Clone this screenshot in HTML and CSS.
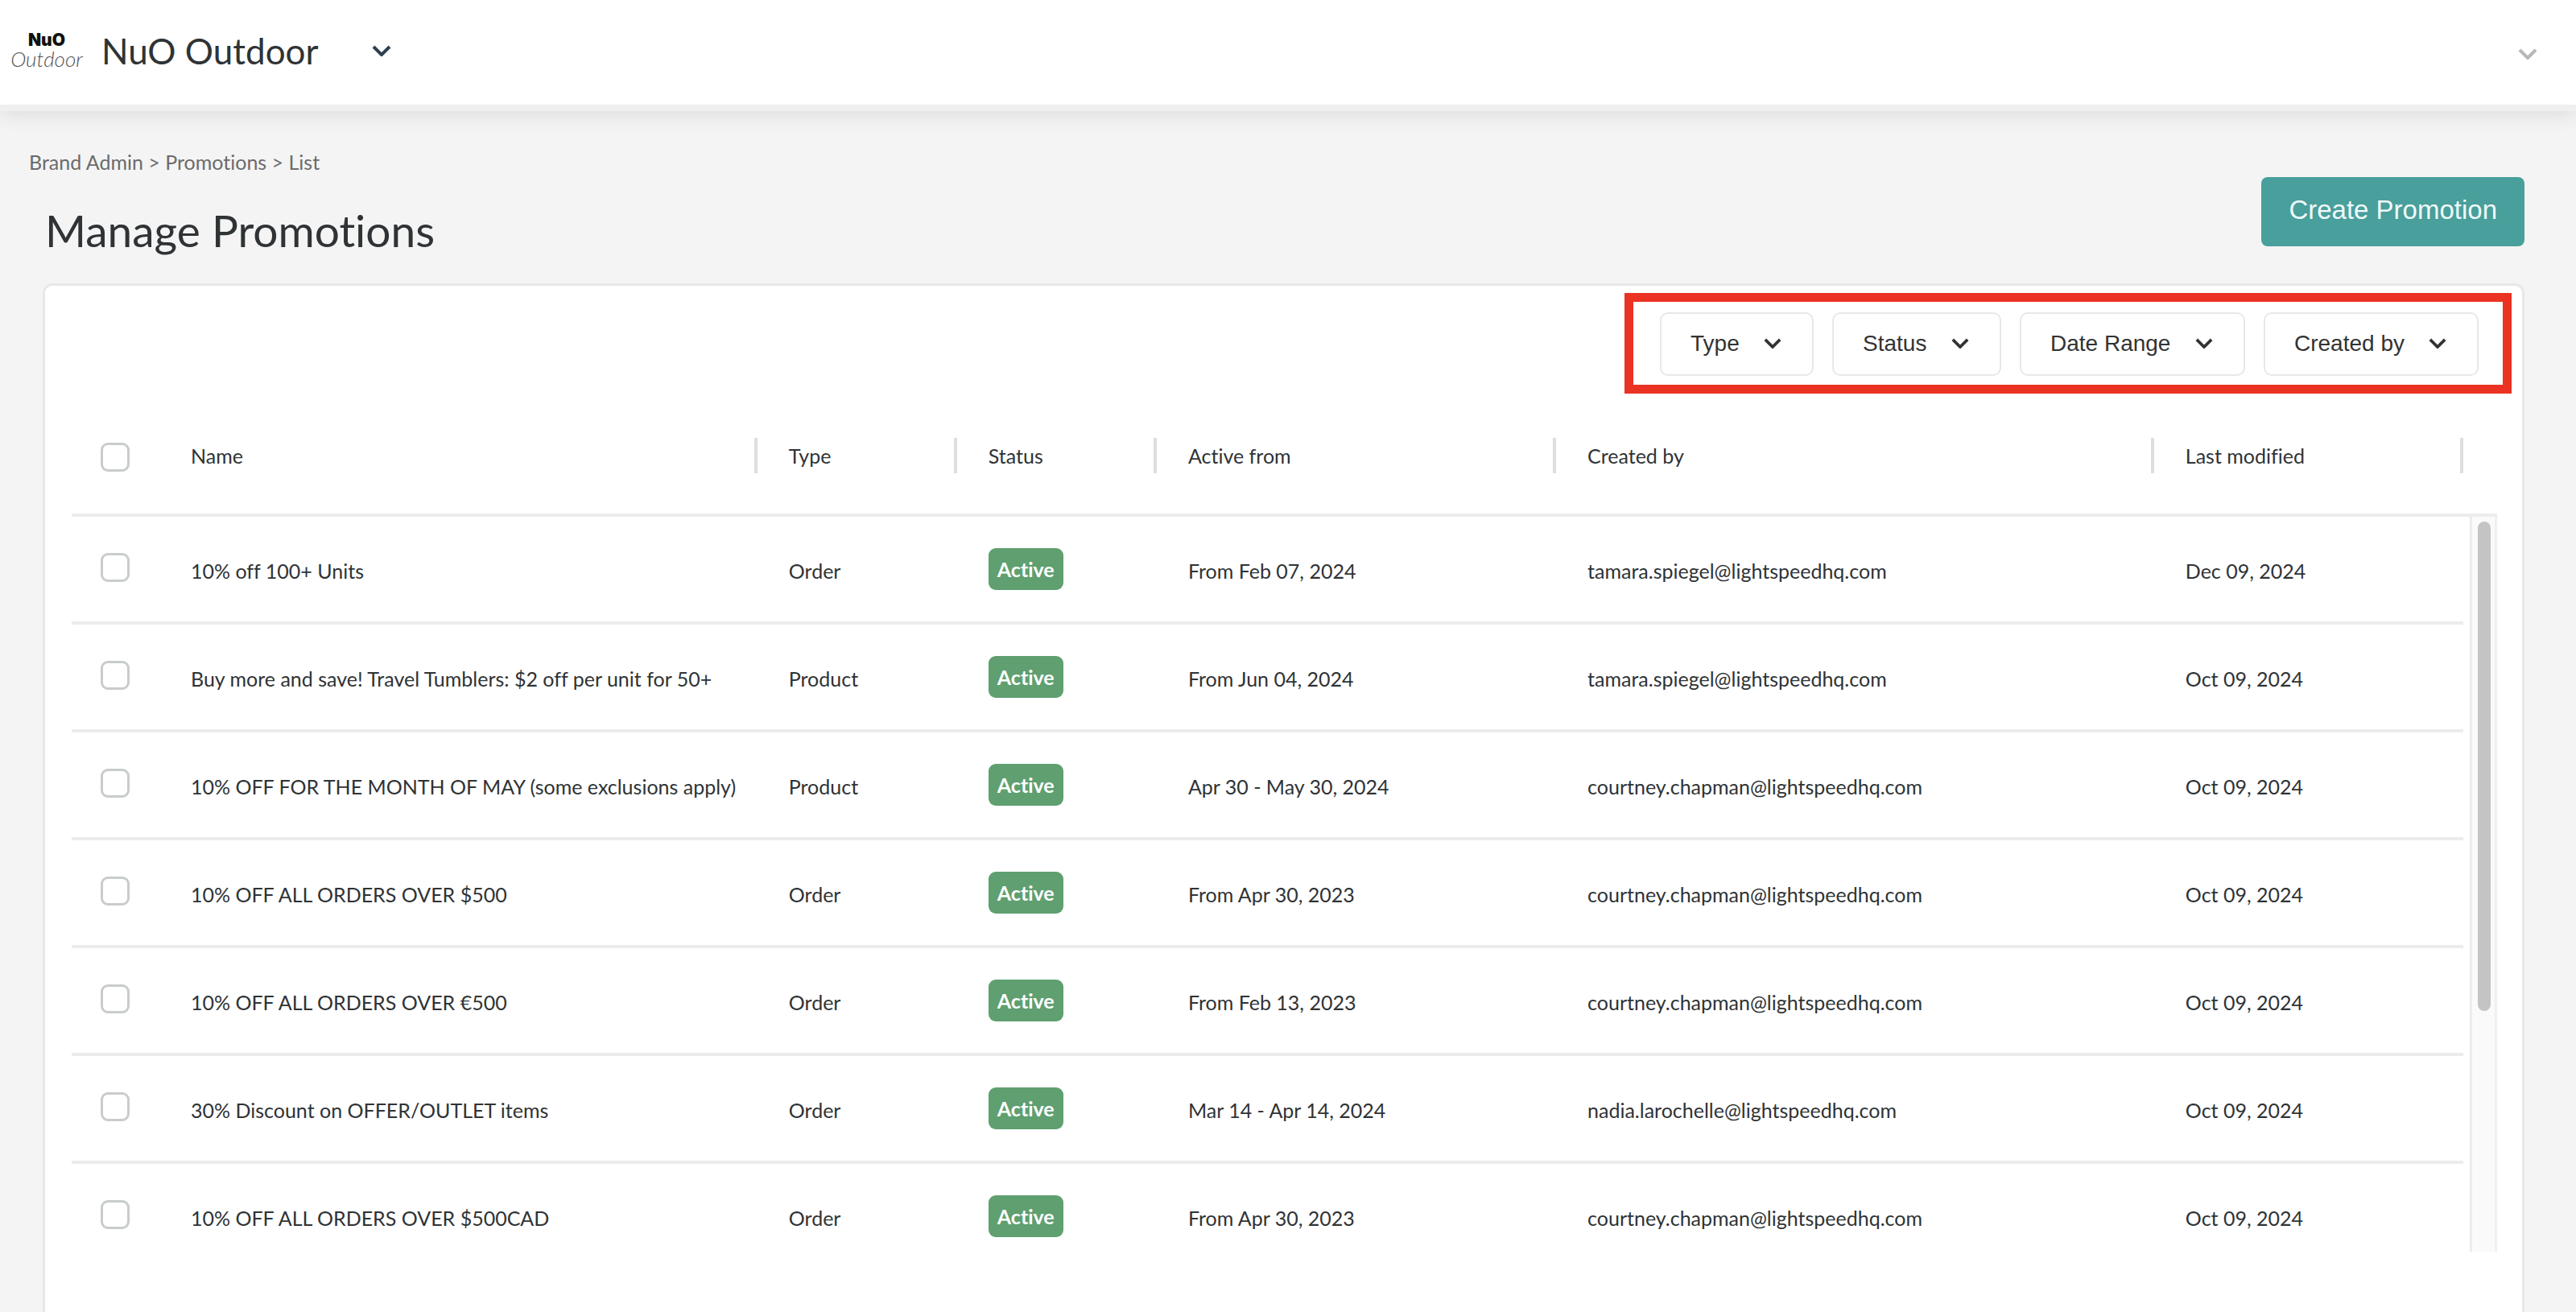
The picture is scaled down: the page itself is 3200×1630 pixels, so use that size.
FILE: index.html
```html
<!DOCTYPE html>
<html lang="en">
<head>
    <meta charset="UTF-8">
    <meta name="viewport" content="width=device-width, initial-scale=1.0">
    <title>Manage Promotions</title>
    <link rel="stylesheet" href="styles.css">
</head>
<body>

<header class="topbar">
    <div class="logo">
        <span class="logo-name">NuO</span>
        <span class="logo-script">Outdoor</span>
    </div>
    <span class="brand">NuO Outdoor</span>
    <button type="button" class="icon-button" aria-label="Switch brand">
        <svg class="chevron" viewBox="0 0 24 14"><path d="M2 2l10 10L22 2"/></svg>
    </button>
    <button type="button" class="icon-button account" aria-label="Account menu">
        <svg class="chevron" viewBox="0 0 24 14"><path d="M2 2l10 10L22 2"/></svg>
    </button>
</header>

<main class="page">
    <nav class="breadcrumb" aria-label="Breadcrumb">
        <a href="#">Brand Admin</a> &gt; <a href="#">Promotions</a> &gt; <a href="#">List</a>
    </nav>

    <div class="page-head">
        <h1>Manage Promotions</h1>
        <button type="button" class="create-button">Create Promotion</button>
    </div>

    <section class="card">
        <div class="filters">
            <div class="filter">
                <select aria-label="Type"><option>Type</option></select>
                <svg class="chevron" viewBox="0 0 24 14"><path d="M2 2l10 10L22 2"/></svg>
            </div>
            <div class="filter">
                <select aria-label="Status"><option>Status</option></select>
                <svg class="chevron" viewBox="0 0 24 14"><path d="M2 2l10 10L22 2"/></svg>
            </div>
            <div class="filter">
                <select aria-label="Date Range"><option>Date Range</option></select>
                <svg class="chevron" viewBox="0 0 24 14"><path d="M2 2l10 10L22 2"/></svg>
            </div>
            <div class="filter">
                <select aria-label="Created by"><option>Created by</option></select>
                <svg class="chevron" viewBox="0 0 24 14"><path d="M2 2l10 10L22 2"/></svg>
            </div>
        </div>

        <div class="list">
            <table>
                <colgroup>
                    <col class="col-check">
                    <col class="col-name">
                    <col class="col-type">
                    <col class="col-status">
                    <col class="col-active">
                    <col class="col-created">
                    <col>
                </colgroup>
                <thead>
                    <tr>
                        <th class="check"><input type="checkbox" aria-label="Select all"></th>
                        <th><div class="head-cell">Name</div></th>
                        <th><div class="head-cell">Type</div></th>
                        <th><div class="head-cell">Status</div></th>
                        <th><div class="head-cell">Active from</div></th>
                        <th><div class="head-cell">Created by</div></th>
                        <th><div class="head-cell">Last modified</div></th>
                    </tr>
                </thead>
                <tbody>
                    <tr>
                        <td class="check"><input type="checkbox" aria-label="Select row"></td>
                        <td>10% off 100+ Units</td>
                        <td>Order</td>
                        <td class="status"><span class="badge">Active</span></td>
                        <td>From Feb 07, 2024</td>
                        <td>tamara.spiegel@lightspeedhq.com</td>
                        <td>Dec 09, 2024</td>
                    </tr>
                    <tr>
                        <td class="check"><input type="checkbox" aria-label="Select row"></td>
                        <td>Buy more and save! Travel Tumblers: $2 off per unit for 50+</td>
                        <td>Product</td>
                        <td class="status"><span class="badge">Active</span></td>
                        <td>From Jun 04, 2024</td>
                        <td>tamara.spiegel@lightspeedhq.com</td>
                        <td>Oct 09, 2024</td>
                    </tr>
                    <tr>
                        <td class="check"><input type="checkbox" aria-label="Select row"></td>
                        <td>10% OFF FOR THE MONTH OF MAY (some exclusions apply)</td>
                        <td>Product</td>
                        <td class="status"><span class="badge">Active</span></td>
                        <td>Apr 30 - May 30, 2024</td>
                        <td>courtney.chapman@lightspeedhq.com</td>
                        <td>Oct 09, 2024</td>
                    </tr>
                    <tr>
                        <td class="check"><input type="checkbox" aria-label="Select row"></td>
                        <td>10% OFF ALL ORDERS OVER $500</td>
                        <td>Order</td>
                        <td class="status"><span class="badge">Active</span></td>
                        <td>From Apr 30, 2023</td>
                        <td>courtney.chapman@lightspeedhq.com</td>
                        <td>Oct 09, 2024</td>
                    </tr>
                    <tr>
                        <td class="check"><input type="checkbox" aria-label="Select row"></td>
                        <td>10% OFF ALL ORDERS OVER €500</td>
                        <td>Order</td>
                        <td class="status"><span class="badge">Active</span></td>
                        <td>From Feb 13, 2023</td>
                        <td>courtney.chapman@lightspeedhq.com</td>
                        <td>Oct 09, 2024</td>
                    </tr>
                    <tr>
                        <td class="check"><input type="checkbox" aria-label="Select row"></td>
                        <td>30% Discount on OFFER/OUTLET items</td>
                        <td>Order</td>
                        <td class="status"><span class="badge">Active</span></td>
                        <td>Mar 14 - Apr 14, 2024</td>
                        <td>nadia.larochelle@lightspeedhq.com</td>
                        <td>Oct 09, 2024</td>
                    </tr>
                    <tr>
                        <td class="check"><input type="checkbox" aria-label="Select row"></td>
                        <td>10% OFF ALL ORDERS OVER $500CAD</td>
                        <td>Order</td>
                        <td class="status"><span class="badge">Active</span></td>
                        <td>From Apr 30, 2023</td>
                        <td>courtney.chapman@lightspeedhq.com</td>
                        <td>Oct 09, 2024</td>
                    </tr>
                </tbody>
            </table>
            <div class="scroll-side" aria-hidden="true">
                <div class="scroll-track">
                    <div class="scroll-thumb"></div>
                </div>
            </div>
        </div>
    </section>
</main>

</body>
</html>
```

FILE: styles.css
```css
* {
    box-sizing: border-box;
}
body {
    margin: 0;
    min-height: 100vh;
    display: flex;
    flex-direction: column;
    background-color: #f4f4f4;
    color: #2f3335;
    font-family: Lato, sans-serif;
    font-size: 25px;
    line-height: 30px;
    font-variant-ligatures: none;
}
a {
    color: inherit;
    text-decoration: none;
}
button {
    cursor: pointer;
}

/* top bar */
.topbar {
    display: flex;
    align-items: center;
    height: 130px;
    padding: 0 48px 4px 8px;
    background-color: white;
    box-shadow: 0 8px 0 #efefef, 0 12px 24px rgba(0, 0, 0, 0.1);
}
.logo {
    width: 100px;
    height: 100px;
    display: flex;
    flex-direction: column;
    align-items: center;
    justify-content: center;
    border-radius: 10px;
    color: #111;
}
.logo-name {
    font-family: Inter, sans-serif;
    font-size: 21px;
    font-weight: 900;
    line-height: 20px;
}
.logo-script {
    font-size: 26px;
    font-style: italic;
    font-weight: 300;
    line-height: 26px;
    color: #555;
}
.brand {
    margin-left: 18px;
    font-size: 44px;
    line-height: 56px;
}
.icon-button {
    display: flex;
    margin-left: 66px;
    padding: 0;
    border: none;
    background: none;
    color: #2f4050;
}
.account {
    margin-left: auto;
    padding-top: 8px;
    color: #b8b8b8;
}
.chevron {
    width: 24px;
    height: 14px;
    fill: none;
    stroke: currentColor;
    stroke-width: 4;
}

/* page */
.page {
    flex: 1;
    display: flex;
    flex-direction: column;
    padding: 56px 64px 0 36px;
}
.breadcrumb {
    color: #6b6b6b;
}
.page-head {
    display: flex;
    justify-content: space-between;
    align-items: flex-start;
    padding: 4px 0 34px 20px;
}
h1 {
    margin: 34px 0 0;
    font-size: 55px;
    font-weight: 400;
    line-height: 64px;
}
.create-button {
    height: 86px;
    padding: 0 34px 4px;
    border: none;
    border-radius: 8px;
    background-color: #489f9b;
    color: #f0fafa;
    font-family: "Liberation Sans", Arial, sans-serif;
    font-size: 33px;
}
.card {
    flex: 1;
    margin-left: 17px;
    padding: 9px 13px 0 33px;
    background-color: white;
    border: 3px solid #e8e8e8;
    border-bottom: none;
    border-radius: 12px 12px 0 0;
}

/* filters */
.filters {
    display: flex;
    gap: 23px;
    width: fit-content;
    margin-left: auto;
    padding: 13px 30px 11px 33px;
    border: 11px solid #eb3323;
}
.filter {
    position: relative;
}
.filter select {
    appearance: none;
    height: 79px;
    padding: 0 90px 2px 36px;
    border: 2px solid #e8e8e8;
    border-radius: 10px;
    background-color: white;
    color: #333;
    font-family: "Liberation Sans", Arial, sans-serif;
    font-size: 28px;
}
.filter .chevron {
    position: absolute;
    right: 40px;
    top: 32px;
    width: 22px;
    height: 13px;
    color: #333;
    pointer-events: none;
}

/* table */
.list {
    display: flex;
    padding-right: 18px;
}
table {
    flex: 1;
    table-layout: fixed;
    border-collapse: separate;
    border-spacing: 0;
}
.col-check {
    width: 109px;
}
.col-name,
.col-created {
    width: 25%;
}
.col-type,
.col-status {
    width: 8.35%;
}
.col-active {
    width: 16.7%;
}
th,
td {
    padding: 4px 0 0 39px;
    text-align: left;
    font-weight: 400;
    white-space: nowrap;
    border-bottom: 4px solid #ececec;
}
th {
    height: 153px;
}
td {
    height: 134px;
}
tbody tr:last-child td {
    height: 130px;
    border-bottom: none;
}
.head-cell {
    height: 44px;
    line-height: 44px;
    border-right: 4px solid #dedede;
}
td.check {
    padding: 0 0 4px 36px;
}
th.check {
    padding: 8px 0 0 36px;
}
.status {
    padding-top: 0;
}
input[type="checkbox"] {
    display: block;
    appearance: none;
    width: 36px;
    height: 36px;
    margin: 0;
    border: 3px solid #c9cccc;
    border-radius: 9px;
    background-color: white;
}
.badge {
    display: inline-block;
    padding: 11px;
    border-radius: 9px;
    background-color: #5f9f70;
    color: white;
    font-weight: 700;
}

/* scrollbar column */
.scroll-side {
    width: 42px;
    height: 917px;
    margin-top: 149px;
    padding-left: 8px;
    border-top: 4px solid #ececec;
}
.scroll-track {
    height: 100%;
    padding: 6px 5px 0 7px;
    background-color: #fafafa;
    border-left: 3px solid #ececec;
    border-right: 3px solid #f0f0f0;
}
.scroll-thumb {
    height: 67%;
    border-radius: 10px;
    background-color: #c4c4c4;
}
```
